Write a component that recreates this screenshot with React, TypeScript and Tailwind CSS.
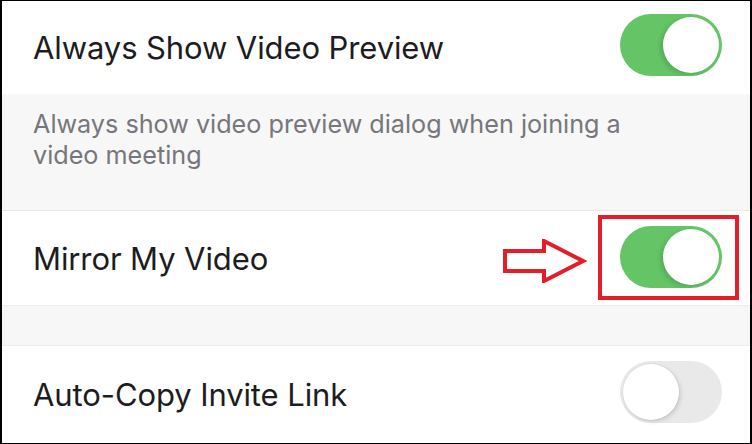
const font = { fontFamily: 'Inter, "Noto Sans", sans-serif' };

function Toggle({ on }: { on: boolean }) {
  return (
    <div
      className={`relative h-[62px] w-[102px] rounded-full ${
        on ? 'bg-[#64c466]' : 'bg-[#e9e9ea]'
      }`}
    >
      <div
        className={`absolute top-[3px] h-[56px] w-[56px] rounded-full bg-white ${
          on
            ? 'right-[3px] shadow-[-3px_2px_4px_rgba(0,0,0,0.12)]'
            : 'left-[3px] shadow-[2px_2px_4px_rgba(0,0,0,0.12),0_0_0_1px_rgba(0,0,0,0.04)]'
        }`}
      />
    </div>
  );
}

function Row({ label, children }: { label: string; children: React.ReactNode }) {
  return (
    <div className="flex items-center justify-between bg-white pl-[31px] pr-[28px]">
      <span className="text-[31px] leading-none tracking-[-0.1px] text-[#1c1c21]">{label}</span>
      {children}
    </div>
  );
}

export default function App() {
  return (
    <div
      className="h-[444px] w-[752px] overflow-hidden border-t border-b border-l-2 border-r-2 border-black bg-white"
      style={font}
    >
      {/* Video preview */}
      <div className="h-[93px]">
        <Row label="Always Show Video Preview">
          <div className="pt-[13px] pb-[17px]">
            <Toggle on />
          </div>
        </Row>
      </div>

      <div className="h-[117px] border-b border-[#e8e8ea] bg-[#f7f7f7] pl-[31px] pr-[110px] pt-[15px]">
        <p className="text-[25.2px] leading-[31px] text-[#76767b]">
          Always show video preview dialog when joining a video meeting
        </p>
      </div>

      {/* Mirror */}
      <div className="h-[95px] border-b border-[#ececee]">
        <Row label="Mirror My Video">
          <div className="relative flex items-center pt-[15px] pb-[17px]">
            <svg
              className="absolute left-[-117px] top-[28px]"
              width="84"
              height="44"
              viewBox="0 0 84 44"
            >
              <polygon
                points="2,12 41,12 41,2 80,22 41,42 41,32 2,32"
                fill="white"
                stroke="#e31e2a"
                strokeWidth="4"
                strokeLinejoin="miter"
              />
            </svg>
            <div className="absolute left-[-22px] top-[4px] h-[85px] w-[141px] border-4 border-[#e31e2a]" />
            <Toggle on />
          </div>
        </Row>
      </div>

      <div className="h-[40px] border-b border-[#ececee] bg-[#f7f7f7]" />

      {/* Auto copy */}
      <div className="h-[96px]">
        <Row label="Auto-Copy Invite Link">
          <div className="pt-[15px] pb-[19px]">
            <Toggle on={false} />
          </div>
        </Row>
      </div>
    </div>
  );
}
